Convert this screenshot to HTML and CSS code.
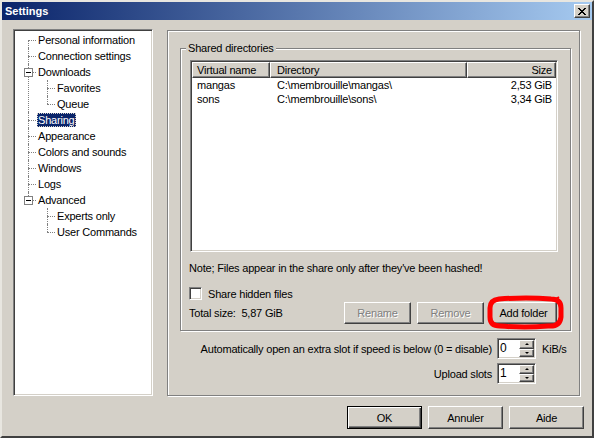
FILE: index.html
```html
<!DOCTYPE html>
<html>
<head>
  <title>Settings</title>
  <link rel="stylesheet" href="styles.css">
</head>
<body>
<div class="window">
  <div class="titlebar">
    <span class="title">Settings</span>
    <span class="close">
      <svg width="8" height="7" viewBox="0 0 8 7"><path d="M0 0 L7 7 M1 0 L8 7 M7 0 L0 7 M8 0 L1 7" stroke="#000" stroke-width="1" shape-rendering="crispEdges"/></svg>
    </span>
  </div>

  <div class="main">
    <!-- left: settings pages -->
    <div class="tree">
      <ul>
        <li>Personal information</li>
        <li>Connection settings</li>
        <li><span class="toggle"></span>Downloads
          <ul>
            <li>Favorites</li>
            <li>Queue</li>
          </ul>
        </li>
        <li><span class="selected">Sharing</span></li>
        <li>Appearance</li>
        <li>Colors and sounds</li>
        <li>Windows</li>
        <li>Logs</li>
        <li><span class="toggle"></span>Advanced
          <ul>
            <li>Experts only</li>
            <li>User Commands</li>
          </ul>
        </li>
      </ul>
    </div>

    <!-- right: sharing page -->
    <div class="page">
      <div class="group">
        <div class="group-title">Shared directories</div>
        <div class="listview">
          <div class="list-head">
            <div class="col col-name">Virtual name</div>
            <div class="col col-dir">Directory</div>
            <div class="col col-size">Size</div>
          </div>
          <div class="list-row">
            <div class="col-name">mangas</div>
            <div class="col-dir">C:\membrouille\mangas\</div>
            <div class="col-size">2,53 GiB</div>
          </div>
          <div class="list-row">
            <div class="col-name">sons</div>
            <div class="col-dir">C:\membrouille\sons\</div>
            <div class="col-size">3,34 GiB</div>
          </div>
        </div>

        <div class="note">Note; Files appear in the share only after they've been hashed!</div>

        <label class="check-row"><span class="checkbox"></span>Share hidden files</label>

        <div class="actions">
          <div class="total">Total size:&nbsp; 5,87 GiB</div>
          <div class="action-buttons">
            <button class="btn disabled">Rename</button>
            <button class="btn disabled">Remove</button>
            <div class="marked">
              <button class="btn">Add folder</button>
              <svg class="scribble" width="78" height="35" viewBox="0 0 78 35">
                <path d="M12 4 Q40 2 64 4 Q74 4 74 13 V22 Q73 32 61 31 Q38 33 13 31 Q3 31 3 22 V13 Q3 5 12 4 Z" fill="none" stroke="#ff0000" stroke-width="5"/>
                <path d="M67 5 L72 2" stroke="#ff0000" stroke-width="2"/>
              </svg>
            </div>
          </div>
        </div>
      </div>

      <div class="slots">
        <div class="slot-label">Automatically open an extra slot if speed is below (0 = disable)</div>
        <div class="spin"><span class="spin-value">0</span><span class="spin-arrows"><span class="up"></span><span class="down"></span></span></div>
        <div class="slot-unit">KiB/s</div>

        <div class="slot-label">Upload slots</div>
        <div class="spin"><span class="spin-value">1</span><span class="spin-arrows"><span class="up"></span><span class="down"></span></span></div>
        <div class="slot-unit"></div>
      </div>
    </div>
  </div>

  <div class="footer">
    <button class="btn wide default">OK</button>
    <button class="btn wide">Annuler</button>
    <button class="btn wide">Aide</button>
  </div>
</div>
</body>
</html>
```

FILE: styles.css
```css
* {
  box-sizing: border-box;
}

body {
  margin: 0;
  font-family: "Liberation Sans", Arial, sans-serif;
  font-size: 11px;
  letter-spacing: -0.2px;
  color: #000;
  background-color: #d4d0c8;
}

.window {
  width: 594px;
  height: 438px;
  background-color: #d4d0c8;
  border: 2px solid;
  border-color: #e8e6e0 #404040 #404040 #e8e6e0;
  overflow: hidden;
}

/* title bar */
.titlebar {
  height: 18px;
  display: flex;
  align-items: center;
  justify-content: space-between;
  padding: 0 2px 0 3px;
  background: linear-gradient(to right, #0a246a, #a6caf0);
}

.title {
  color: #fff;
  font-weight: bold;
  font-size: 11px;
  letter-spacing: 0;
}

.close {
  width: 16px;
  height: 14px;
  display: flex;
  align-items: center;
  justify-content: center;
  background-color: #d4d0c8;
  border: 1px solid;
  border-color: #fff #404040 #404040 #fff;
  box-shadow: inset -1px -1px #808080;
}

.main {
  display: flex;
  align-items: flex-start;
  padding: 9px 0 0 11px;
}

/* tree view */
.tree {
  width: 140px;
  height: 367px;
  background-color: #fff;
  border: 1px solid;
  border-color: #808080 #fff #fff #808080;
  box-shadow: inset 1px 1px #404040, inset -1px -1px #d4d0c8;
  padding: 2px 0 0 1px;
}

.tree ul {
  list-style: none;
  margin: 0;
  padding: 0;
}

.tree li {
  position: relative;
  padding-left: 23px;
  line-height: 16px;
  white-space: nowrap;
}

.tree li::before {
  content: "";
  position: absolute;
  left: 13px;
  top: 8px;
  width: 8px;
  border-top: 1px dotted #808080;
}

.tree li::after {
  content: "";
  position: absolute;
  left: 13px;
  top: 0;
  bottom: 0;
  border-left: 1px dotted #808080;
}

.tree > ul > li:first-child::after {
  top: 8px;
}

.tree li:last-child::after {
  bottom: auto;
  height: 8px;
}

.tree li ul {
  margin-left: -4px;
}

.toggle {
  position: absolute;
  left: 9px;
  top: 4px;
  width: 9px;
  height: 9px;
  border: 1px solid #808080;
  background-color: #fff;
  z-index: 1;
}

.toggle::before {
  content: "";
  position: absolute;
  left: 1px;
  top: 3px;
  width: 5px;
  height: 1px;
  background-color: #000;
}

.selected {
  display: inline-block;
  line-height: 14px;
  padding: 0 1px;
  margin-left: -1px;
  background-color: #0a246a;
  color: #fff;
  outline: 1px dotted #d4d0c8;
  outline-offset: -1px;
}

/* sharing page */
.page {
  width: 413px;
  height: 366px;
  margin: 1px 0 0 14px;
  border: 1px solid #808080;
  box-shadow: inset 1px 1px #fff, 1px 1px #fff;
  padding-top: 17px;
}

.group {
  margin: 0 8px 0 12px;
  border: 1px solid #808080;
  box-shadow: inset 1px 1px #fff, 1px 1px #fff;
  padding-bottom: 6px;
}

.group-title {
  width: fit-content;
  height: 13px;
  line-height: 13px;
  margin: -7px 0 0 5px;
  padding: 0 2px;
  background-color: #d4d0c8;
}

.listview {
  width: 368px;
  height: 192px;
  margin: 5px 0 0 9px;
  background-color: #fff;
  border: 1px solid;
  border-color: #808080 #fff #fff #808080;
  box-shadow: inset 1px 1px #404040, inset -1px -1px #d4d0c8;
  padding: 1px;
}

.list-head,
.list-row {
  display: grid;
  grid-template-columns: 78px 197px 1fr;
}

.list-head .col {
  height: 16px;
  line-height: 14px;
  background-color: #d4d0c8;
  border: 1px solid;
  border-color: #fff #404040 #404040 #fff;
  box-shadow: inset -1px -1px #808080;
}

.list-row {
  height: 14px;
  line-height: 14px;
}

.col-name {
  padding-left: 4px;
}

.list-row .col-name {
  padding-left: 5px;
}

.col-dir {
  padding-left: 6px;
}

.list-row .col-dir {
  padding-left: 7px;
}

.col-size {
  text-align: right;
  padding-right: 3px;
}

.list-row .col-size {
  padding-right: 4px;
}

.note {
  margin: 10px 0 0 8px;
  line-height: 13px;
}

.check-row {
  display: flex;
  align-items: center;
  margin: 12px 0 0 8px;
  height: 13px;
}

.checkbox {
  width: 13px;
  height: 13px;
  margin-right: 6px;
  background-color: #fff;
  border: 1px solid;
  border-color: #808080 #fff #fff #808080;
  box-shadow: inset 1px 1px #404040, inset -1px -1px #d4d0c8;
}

.actions {
  display: flex;
  align-items: center;
  justify-content: space-between;
  margin-top: 2px;
  padding: 0 13px 0 8px;
}

.action-buttons {
  display: flex;
  gap: 6px;
}

.btn {
  font-family: "Liberation Sans", Arial, sans-serif;
  font-size: 11px;
  letter-spacing: -0.2px;
  color: #000;
  width: 67px;
  height: 22px;
  padding: 0;
  background-color: #d4d0c8;
  border: 1px solid;
  border-color: #fff #404040 #404040 #fff;
  box-shadow: inset -1px -1px #808080;
}

.btn.disabled {
  color: #808080;
  text-shadow: 1px 1px #fff;
}

.marked {
  position: relative;
}

.scribble {
  position: absolute;
  left: -3px;
  top: -7px;
}

/* extra slot settings */
.slots {
  display: grid;
  grid-template-columns: 1fr 39px 36px;
  row-gap: 4px;
  align-items: center;
  margin-top: 7px;
  padding-right: 7px;
}

.slot-label {
  text-align: right;
  padding-right: 5px;
}

.slot-unit {
  padding-left: 6px;
}

.spin {
  display: flex;
  height: 21px;
  background-color: #fff;
  border: 1px solid;
  border-color: #808080 #fff #fff #808080;
  box-shadow: inset 1px 1px #404040, inset -1px -1px #d4d0c8;
  padding: 1px 1px 1px 2px;
}

.spin-value {
  flex: 1;
  font-size: 12px;
  line-height: 17px;
}

.spin-arrows {
  display: flex;
  flex-direction: column;
  width: 15px;
}

.spin-arrows span {
  flex: 1;
  display: flex;
  align-items: center;
  justify-content: center;
  background-color: #d4d0c8;
  border: 1px solid;
  border-color: #fff #404040 #404040 #fff;
  box-shadow: inset -1px -1px #808080;
}

.spin-arrows .up::before,
.spin-arrows .down::before {
  content: "";
  border-left: 2px solid transparent;
  border-right: 2px solid transparent;
}

.spin-arrows .up::before {
  border-bottom: 2px solid #000;
}

.spin-arrows .down::before {
  border-top: 2px solid #000;
}

/* dialog buttons */
.footer {
  display: flex;
  justify-content: flex-end;
  gap: 6px;
  margin-top: 10px;
  padding-right: 8px;
}

.btn.wide {
  width: 75px;
  height: 23px;
}

.btn.default {
  border: 1px solid #000;
  box-shadow: inset 1px 1px #fff, inset -1px -1px #404040, inset -2px -2px #808080;
}
```
